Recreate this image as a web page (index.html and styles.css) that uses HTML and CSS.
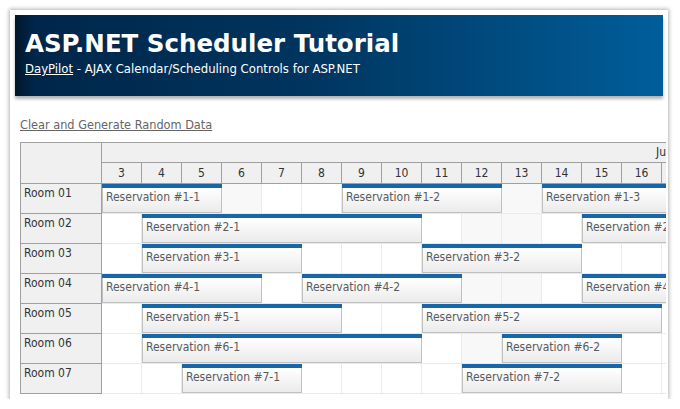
FILE: index.html
```html
<!DOCTYPE html>
<html>
<head>
<meta charset="utf-8">
<title>ASP.NET Scheduler Tutorial</title>
<link rel="stylesheet" href="styles.css">
</head>
<body>
<div class="frame">
  <div class="header">
    <h1 class="title">ASP.NET Scheduler Tutorial</h1>
    <div class="subtitle"><a href="#">DayPilot</a> - AJAX Calendar/Scheduling Controls for ASP.NET</div>
  </div>
  <div class="content">
    <p class="actions"><a href="#">Clear and Generate Random Data</a></p>
    <div class="scheduler">
      <div class="hdr">
        <div class="corner"></div>
        <div class="timeheader">
          <div class="month">June 2010</div>
          <div class="days">
            <div class="day">3</div><div class="day">4</div><div class="day">5</div><div class="day">6</div>
            <div class="day">7</div><div class="day">8</div><div class="day">9</div><div class="day">10</div>
            <div class="day">11</div><div class="day">12</div><div class="day">13</div><div class="day">14</div>
            <div class="day">15</div><div class="day">16</div><div class="day">17</div><div class="day">18</div>
            <div class="day">19</div><div class="day">20</div>
          </div>
        </div>
      </div>
      <div id="rows"></div>
    </div>
  </div>
</div>
<script src="app.js"></script>
</body>
</html>
```
FILE: styles.css
```css
html, body {
  margin: 0;
  padding: 0;
  background: #fff;
}
body {
  font-family: "DejaVu Sans Condensed", "DejaVu Sans", sans-serif;
  color: #333;
}
.frame {
  margin: 10px 0 0 10px;
  width: 658px;
  height: 389px;
  box-sizing: border-box;
  padding: 5px;
  background: #fff;
  box-shadow: 0 0 4px 1px rgba(0, 0, 0, 0.3);
  overflow: hidden;
}
.header {
  height: 81px;
  box-sizing: border-box;
  padding: 15px 10px 0 10px;
  background: linear-gradient(to right, #001629 0, #001f3d 1.5%, #00264a 3%, #00355f 45%, #005e9a 100%);
  box-shadow: 0 3px 3px rgba(0, 0, 0, 0.3);
  color: #fff;
}
.title {
  margin: 0;
  font-family: "DejaVu Sans", sans-serif;
  font-size: 24.5px;
  line-height: 28px;
  font-weight: bold;
}
.subtitle {
  margin-top: 3px;
  font-size: 13px;
  line-height: 15px;
}
.subtitle a {
  color: #fff;
}
.content {
  padding: 0 5px;
}
.actions {
  margin: 21px 0 9px 0;
  font-size: 12.6px;
  line-height: 16px;
}
.actions a {
  color: #666;
}
.scheduler {
  width: 645px;
  overflow: hidden;
  border-top: 1px solid #a0a0a0;
  border-left: 1px solid #a0a0a0;
  font-size: 12px;
}
.hdr {
  display: flex;
}
.corner {
  flex: none;
  width: 80px;
  height: 40px;
  background: #f0f0f0;
  border-right: 1px solid #a0a0a0;
  border-bottom: 1px solid #a0a0a0;
}
.timeheader {
  flex: none;
  display: flex;
  flex-direction: column;
}
.month {
  height: 19px;
  line-height: 19px;
  border-bottom: 1px solid #a0a0a0;
  background: #f0f0f0;
  padding-left: 554px;
  white-space: nowrap;
  color: #333;
}
.days {
  display: flex;
}
.day {
  flex: none;
  width: 39px;
  height: 20px;
  line-height: 20px;
  text-align: center;
  background: #f0f0f0;
  border-right: 1px solid #a0a0a0;
  border-bottom: 1px solid #a0a0a0;
  color: #333;
}
.row {
  display: flex;
}
.rowheader {
  flex: none;
  width: 80px;
  height: 29px;
  background: #f0f0f0;
  border-right: 1px solid #a0a0a0;
  border-bottom: 1px solid #a0a0a0;
  color: #333;
}
.rowheader span {
  display: block;
  padding: 2px 3px;
  line-height: 15px;
}
.cells {
  flex: none;
  position: relative;
  display: flex;
}
.cell {
  flex: none;
  width: 39px;
  height: 29px;
  background: #fff;
  border-right: 1px solid #eaeaea;
  border-bottom: 1px solid #eaeaea;
}
.cell.weekend {
  background: #f8f8f8;
}
.event {
  position: absolute;
  top: 0;
  height: 29px;
  display: flex;
  flex-direction: column;
}
.event .bar {
  height: 4px;
  background: #1766a8;
}
.event .body {
  flex: 1;
  border: 1px solid #c0c0c0;
  border-top: none;
  background: linear-gradient(to bottom, #ffffff, #ebebeb);
  color: #5a5a5a;
  padding: 2px 3px;
  line-height: 15px;
  white-space: nowrap;
  overflow: hidden;
}
```
FILE: app.js
```js
(function () {
  var days = [3,4,5,6,7,8,9,10,11,12,13,14,15,16,17,18,19,20];
  var weekend = {5:1, 6:1, 12:1, 13:1, 19:1, 20:1};
  var rows = [
    ["Room 01", [[0,3,"#1-1"],[6,4,"#1-2"],[11,4,"#1-3"]]],
    ["Room 02", [[1,7,"#2-1"],[12,4,"#2-2"]]],
    ["Room 03", [[1,4,"#3-1"],[8,4,"#3-2"]]],
    ["Room 04", [[0,4,"#4-1"],[5,4,"#4-2"],[12,4,"#4-3"]]],
    ["Room 05", [[1,5,"#5-1"],[8,6,"#5-2"]]],
    ["Room 06", [[1,7,"#6-1"],[10,3,"#6-2"]]],
    ["Room 07", [[2,3,"#7-1"],[9,4,"#7-2"]]]
  ];
  var host = document.getElementById("rows");
  rows.forEach(function (r) {
    var row = document.createElement("div");
    row.className = "row";
    var h = document.createElement("div");
    h.className = "rowheader";
    h.innerHTML = "<span>" + r[0] + "</span>";
    row.appendChild(h);
    var cells = document.createElement("div");
    cells.className = "cells";
    days.forEach(function (d) {
      var c = document.createElement("div");
      c.className = "cell" + (weekend[d] ? " weekend" : "");
      cells.appendChild(c);
    });
    r[1].forEach(function (e) {
      var ev = document.createElement("div");
      ev.className = "event";
      ev.style.left = (e[0] * 40) + "px";
      ev.style.width = (e[1] * 40) + "px";
      ev.innerHTML = '<div class="bar"></div><div class="body">Reservation ' + e[2] + '</div>';
      cells.appendChild(ev);
    });
    row.appendChild(cells);
    host.appendChild(row);
  });
})();
```
